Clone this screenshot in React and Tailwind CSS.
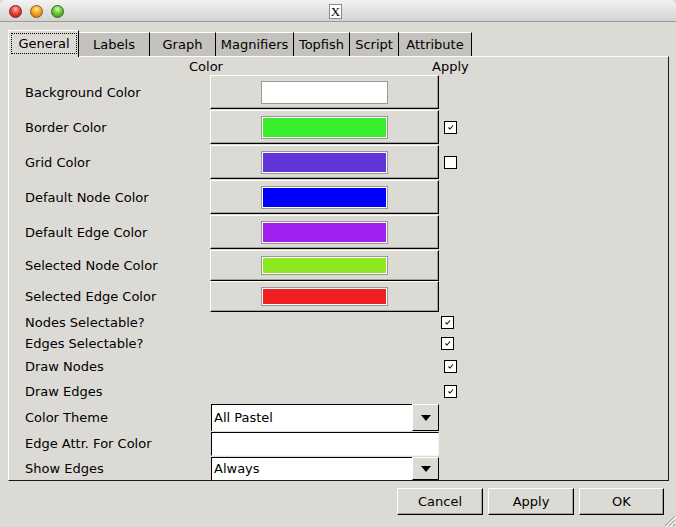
import React from "react";

const Check = ({ checked }) => (
  <div className="w-[13px] h-[13px] border border-black bg-white flex items-center justify-center">
    {checked && (
      <svg width="11" height="11" viewBox="0 0 11 11">
        <path d="M3.5 5.5 L5 7 L8 3.5" fill="none" stroke="#111" strokeWidth="1.1" />
      </svg>
    )}
  </div>
);

const Arrow = () => (
  <svg width="10" height="6" viewBox="0 0 10 6">
    <path d="M0 0 L10 0 L5 6 Z" fill="#000" />
  </svg>
);

const tabs = [
  { name: "Labels", w: "w-[71px]" },
  { name: "Graph", w: "w-[66px]" },
  { name: "Magnifiers", w: "w-[78px]" },
  { name: "Topfish", w: "w-[56px]" },
  { name: "Script", w: "w-[49px]" },
  { name: "Attribute", w: "w-[73px]" },
];

const colorRows = [
  { label: "Background Color", color: "#ffffff", tall: true, check: null },
  { label: "Border Color", color: "#36ee2b", tall: true, check: true },
  { label: "Grid Color", color: "#6034d7", tall: true, check: false },
  { label: "Default Node Color", color: "#0000ff", tall: true, check: null },
  { label: "Default Edge Color", color: "#a020f0", tall: true, check: null },
  { label: "Selected Node Color", color: "#8ce81f", tall: false, check: null },
  { label: "Selected Edge Color", color: "#f02020", tall: false, check: null },
];

function ColorRow({ label, color, tall, check }) {
  return (
    <div className={tall ? "flex h-[35px]" : "flex h-[31px]"}>
      <div className="w-[201px] pl-[16px] flex items-center">{label}</div>
      <div className="w-[229px]">
        <div
          className={
            (tall ? "h-[34px]" : "h-[31px]") +
            " border-t border-l border-white border-r border-b border-r-black border-b-black shadow-[inset_-1px_-1px_0_#a3a19c] flex items-center pl-[50px]"
          }
        >
          <div className={(tall ? "h-[23px]" : "h-[19px]") + " w-[127px] border border-[#9a9893] p-px bg-white"}>
            <div className="w-full h-full" style={{ background: color }} />
          </div>
        </div>
      </div>
      <div className="flex-1 flex items-center pl-[5px]">
        {check !== null && <Check checked={check} />}
      </div>
    </div>
  );
}

function CheckRow({ label, h, pl }) {
  return (
    <div className={"flex " + h}>
      <div className="w-[201px] pl-[16px] flex items-center">{label}</div>
      <div className="w-[229px]" />
      <div className={"flex-1 flex items-center " + pl}>
        <Check checked />
      </div>
    </div>
  );
}

function Combo({ text, h }) {
  return (
    <div className={"ml-[1px] w-[228px] flex " + h}>
      <div className="w-[201px] bg-white border-t border-l border-black flex items-center pl-[2px]">{text}</div>
      <div className="w-[27px] bg-[#dcdad5] border-t border-l border-white border-r border-b border-r-black border-b-black flex items-center justify-center">
        <Arrow />
      </div>
    </div>
  );
}

function Btn({ children, w }) {
  return (
    <div
      className={
        w +
        " h-[27px] border-t border-l border-white border-r border-b border-r-black border-b-black shadow-[inset_-1px_-1px_0_#a3a19c] flex items-center justify-center"
      }
    >
      {children}
    </div>
  );
}

export default function App() {
  return (
    <div className="relative w-[676px] h-[527px] overflow-hidden bg-[#dcdad5] text-black text-[13px] font-['DejaVu_Sans',sans-serif]">
      {/* Title bar */}
      <div className="relative h-[22px] border-b border-[#9c9c9c] bg-gradient-to-b from-[#f3f3f3] to-[#d3d3d3] flex items-start pl-[9px] pt-[5px] gap-[8px] rounded-t-[6px]">
        <div className="w-[13px] h-[13px] rounded-full border border-[#7a2420] bg-[radial-gradient(circle_at_50%_30%,#ffc0b8_0%,#e8453a_45%,#a8180f_100%)]" />
        <div className="w-[13px] h-[13px] rounded-full border border-[#8a5a10] bg-[radial-gradient(circle_at_50%_30%,#ffe8a0_0%,#f5a623_45%,#c06a08_100%)]" />
        <div className="w-[13px] h-[13px] rounded-full border border-[#2f6a18] bg-[radial-gradient(circle_at_50%_30%,#d8f8b0_0%,#6cc83a_45%,#2e8a14_100%)]" />
        <div className="absolute left-[329px] top-[4px] w-[13px] h-[15px] bg-white border border-[#8a8a8a] flex items-center justify-center text-[13px] leading-none font-['Liberation_Serif',serif]">
          X
        </div>
      </div>

      {/* Tabs */}
      <div className="flex items-end pl-[8px] h-[34px]">
        <div className="relative z-10 -mb-px w-[71px] h-[27px] bg-[#dcdad5] border-t border-l border-white border-r border-r-black pl-[2px] pt-[2px]">
          <div className="w-[66px] h-[21px] border border-dotted border-black flex items-center justify-center">General</div>
        </div>
        {tabs.map((t) => (
          <div
            key={t.name}
            className={t.w + " h-[24px] bg-[#c4c2bd] border-t border-white border-r border-r-black flex items-center justify-center"}
          >
            {t.name}
          </div>
        ))}
      </div>

      {/* Panel */}
      <div className="ml-[8px] w-[661px] h-[425px] border-t border-l border-white border-r border-b border-r-[#1a1a1a] border-b-[#1a1a1a] flex flex-col">
        <div className="flex h-[18px] leading-[20px]">
          <div className="w-[423px] pl-[180px]">Color</div>
          <div>Apply</div>
        </div>
        {colorRows.map((r) => (
          <ColorRow key={r.label} {...r} />
        ))}
        <CheckRow label="Nodes Selectable?" h="h-[21px]" pl="pl-[2px]" />
        <CheckRow label="Edges Selectable?" h="h-[21px]" pl="pl-[2px]" />
        <CheckRow label="Draw Nodes" h="h-[25px]" pl="pl-[5px]" />
        <CheckRow label="Draw Edges" h="h-[25px]" pl="pl-[5px]" />
        <div className="flex h-[27px]">
          <div className="w-[201px] pl-[16px] flex items-center">Color Theme</div>
          <Combo text="All Pastel" h="h-[27px]" />
        </div>
        <div className="flex h-[26px]">
          <div className="w-[201px] pl-[16px] flex items-center">Edge Attr. For Color</div>
          <div className="ml-[1px] mt-[1px] w-[228px] h-[24px] bg-white border-t border-l border-black border-r border-b border-r-[#f4f4f4] border-b-[#f4f4f4]" />
        </div>
        <div className="flex h-[23px]">
          <div className="w-[201px] pl-[16px] flex items-center">Show Edges</div>
          <Combo text="Always" h="h-[23px]" />
        </div>
      </div>

      {/* Buttons */}
      <div className="flex justify-end gap-[5px] pr-[12px] pt-[7px]">
        <Btn w="w-[86px]">Cancel</Btn>
        <Btn w="w-[86px]">Apply</Btn>
        <Btn w="w-[85px]">OK</Btn>
      </div>

      {/* resize grip */}
      <svg className="absolute right-0 bottom-0" width="13" height="13" viewBox="0 0 13 13">
        <path d="M12 2 L2 12 M12 6 L6 12 M12 10 L10 12" stroke="#9a9893" strokeWidth="1" />
        <path d="M13 3 L3 13 M13 7 L7 13" stroke="#ffffff" strokeWidth="1" />
      </svg>
    </div>
  );
}
